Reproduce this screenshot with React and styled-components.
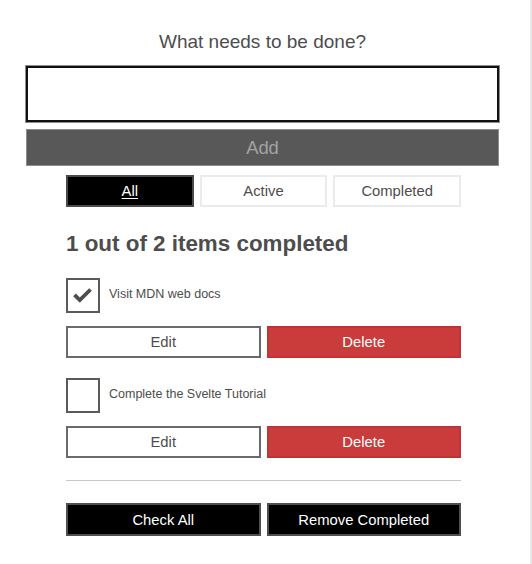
import React from "react";
import styled, { createGlobalStyle } from "styled-components";

const Global = createGlobalStyle`
  html, body { margin: 0; padding: 0; }
  body {
    background: #e9e9e9;
    font-family: "Liberation Sans", Arial, sans-serif;
    color: #4d4d4d;
  }
  * { box-sizing: border-box; }
`;

const Panel = styled.div`
  width: 530px;
  min-height: 564px;
  background: #fff;
  padding-top: 30px;
  display: flex;
  flex-direction: column;
`;

const Form = styled.form`
  display: flex;
  flex-direction: column;
  margin: 0;
`;

const Title = styled.label`
  display: block;
  text-align: center;
  font-size: 19px;
  line-height: 24px;
  color: #4d4d4d;
  width: 525px;
`;

const TextInput = styled.input`
  display: block;
  margin: 12px 0 0 26px;
  width: 473px;
  height: 56px;
  border: 2px solid #111;
  box-shadow: 0 0 0 1px #8c8c8c;
  background: #fff;
  outline: none;
  font-family: inherit;
`;

const AddButton = styled.button`
  display: block;
  margin: 7px 0 0 26px;
  width: 473px;
  height: 37px;
  background: #585858;
  border: 1px solid #8e8e8e;
  color: #a3a3a3;
  font-family: inherit;
  font-size: 18.4px;
  padding: 0;
`;

const Column = styled.div`
  margin-left: 66px;
  width: 395px;
  display: flex;
  flex-direction: column;
`;

const Filters = styled.div`
  margin-top: 9px;
  display: grid;
  grid-template-columns: repeat(3, 1fr);
  gap: 6px;
`;

const FilterButton = styled.button`
  height: 32px;
  padding: 0;
  font-family: inherit;
  font-size: 14.8px;
  background: ${(p) => (p.$active ? "#000" : "#fff")};
  color: ${(p) => (p.$active ? "#fff" : "#4d4d4d")};
  border: ${(p) => (p.$active ? "2px solid #4a4a4a" : "2px solid #ebebeb")};
  text-decoration: ${(p) => (p.$active ? "underline" : "none")};
  text-underline-offset: 2px;
`;

const Status = styled.h2`
  margin: 23px 0 0 0;
  font-size: 22.4px;
  line-height: 28px;
  font-weight: bold;
  color: #4d4d4d;
`;

const List = styled.ul`
  list-style: none;
  margin: 20px 0 0 0;
  padding: 0;
  display: flex;
  flex-direction: column;
  gap: 20px;
`;

const Item = styled.li`
  display: flex;
  flex-direction: column;
  gap: 13px;
`;

const CheckRow = styled.div`
  display: flex;
  align-items: center;
  gap: 9px;
  height: 35px;
`;

const Box = styled.span`
  width: 34px;
  height: 35px;
  border: 2px solid #5a5a5a;
  display: flex;
  align-items: center;
  justify-content: center;
  flex: none;
  background: #fff;
`;

const ItemLabel = styled.label`
  font-size: 12.5px;
  color: #4d4d4d;
  line-height: 16px;
  margin-top: -3px;
`;

const ButtonPair = styled.div`
  display: grid;
  grid-template-columns: 1fr 1fr;
  gap: 6px;
`;

const ActionButton = styled.button`
  height: 32px;
  padding: 0;
  font-family: inherit;
  font-size: 14.8px;
  background: ${(p) => (p.$variant === "danger" ? "#ca3c3c" : p.$variant === "dark" ? "#000" : "#fff")};
  color: ${(p) => (p.$variant === "plain" ? "#4d4d4d" : "#fff")};
  border: 2px solid
    ${(p) => (p.$variant === "danger" ? "#c23434" : p.$variant === "dark" ? "#4f4f4f" : "#6a6a6a")};
`;

const Divider = styled.hr`
  margin: 22px 0 0 0;
  border: none;
  height: 1px;
  background: #c9c9c9;
`;

const BottomPair = styled(ButtonPair)`
  margin-top: 22px;
  & > button {
    height: 33px;
  }
`;

const Check = () => (
  <svg width="30" height="31" viewBox="0 0 30 31">
    <polyline
      points="6.5,14.8 11.8,20 22.5,9.5"
      fill="none"
      stroke="#4d4d4d"
      strokeWidth="3.8"
      strokeLinejoin="miter"
      strokeLinecap="butt"
    />
  </svg>
);

const todos = [
  { id: 1, name: "Visit MDN web docs", done: true },
  { id: 2, name: "Complete the Svelte Tutorial", done: false },
];

export default function App() {
  return (
    <>
      <Global />
      <Panel>
        <Form onSubmit={(e) => e.preventDefault()}>
          <Title htmlFor="todo-0">What needs to be done?</Title>
          <TextInput id="todo-0" type="text" autoComplete="off" />
          <AddButton type="submit">Add</AddButton>
        </Form>
        <Column>
          <Filters>
            <FilterButton $active>All</FilterButton>
            <FilterButton>Active</FilterButton>
            <FilterButton>Completed</FilterButton>
          </Filters>
          <Status>1 out of 2 items completed</Status>
          <List>
            {todos.map((t) => (
              <Item key={t.id}>
                <CheckRow>
                  <Box>{t.done && <Check />}</Box>
                  <ItemLabel>{t.name}</ItemLabel>
                </CheckRow>
                <ButtonPair>
                  <ActionButton $variant="plain">Edit</ActionButton>
                  <ActionButton $variant="danger">Delete</ActionButton>
                </ButtonPair>
              </Item>
            ))}
          </List>
          <Divider />
          <BottomPair>
            <ActionButton $variant="dark">Check All</ActionButton>
            <ActionButton $variant="dark">Remove Completed</ActionButton>
          </BottomPair>
        </Column>
      </Panel>
    </>
  );
}
